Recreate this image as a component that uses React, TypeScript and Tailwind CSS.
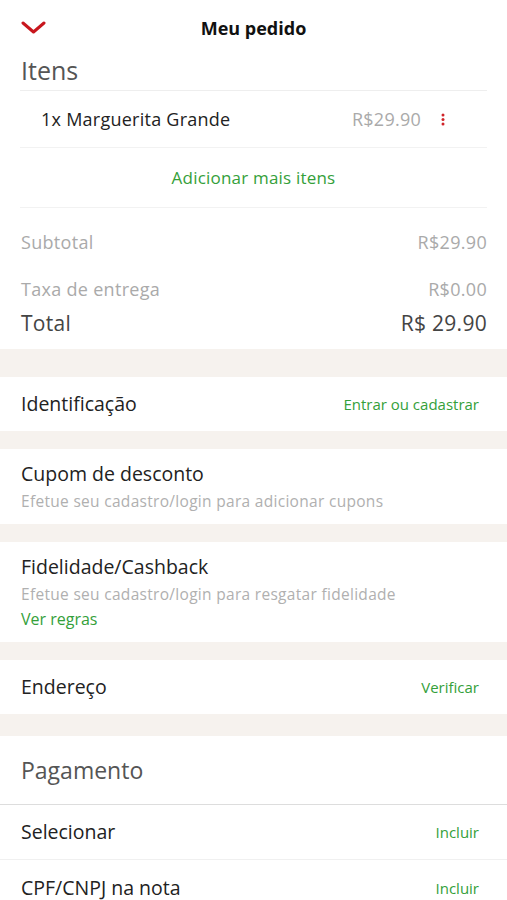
import React from 'react';

const font = { fontFamily: '"Open Sans", Lato, sans-serif' };

function Band({ h }: { h: string }) {
  return <div className={`${h} bg-[#f6f2ee]`} />;
}

function ActionRow({ label, action, h = 'h-[54px]' }: { label: string; action: string; h?: string }) {
  return (
    <div className={`${h} px-[21px] flex items-center justify-between`}>
      <span className="text-[19.5px] text-[#222]">{label}</span>
      <span className="text-[15px] text-[#34a03a] pr-[7px]">{action}</span>
    </div>
  );
}

export default function App() {
  return (
    <div className="w-[507px] h-[900px] overflow-hidden bg-white" style={font}>
      {/* Header */}
      <div className="h-[52px] relative flex items-center justify-center pt-[4px]">
        <svg className="absolute left-[21px] top-[21px]" width="25" height="13" viewBox="0 0 25 13" fill="none">
          <path d="M2 2 L12.5 11 L23 2" stroke="#c8161d" strokeWidth="3" strokeLinecap="round" strokeLinejoin="round" />
        </svg>
        <span className="text-[18px] font-bold text-[#111]">Meu pedido</span>
      </div>

      <div className="px-[20px]">
        <div className="h-[38px] flex items-center text-[25px] text-[#555] pl-[1px]">Itens</div>
        <div className="h-px bg-[#eeeeee]" />
        <div className="h-[56px] flex items-center pl-[21px]">
          <span className="text-[18px] tracking-[0.25px] text-[#222] flex-1">1x Marguerita Grande</span>
          <span className="text-[18px] tracking-[0.25px] text-[#aaa]">R$29.90</span>
          <span className="ml-[20px] mr-[42px] flex">
            <svg width="4" height="13" viewBox="0 0 4 13">
              <circle cx="2" cy="2" r="1.5" fill="#d0242a" />
              <circle cx="2" cy="6.5" r="1.5" fill="#d0242a" />
              <circle cx="2" cy="11" r="1.5" fill="#d0242a" />
            </svg>
          </span>
        </div>
        <div className="h-px bg-[#f2f2f2]" />
        <div className="h-[59px] flex items-center justify-center text-[17px] tracking-[0.2px] text-[#34a03a]">
          Adicionar mais itens
        </div>
        <div className="h-px bg-[#f2f2f2]" />

        <div className="pt-[22px] pb-[12px] pl-[1px]">
          <div className="flex justify-between text-[18px] tracking-[0.3px] text-[#aaa] h-[24px] items-center">
            <span>Subtotal</span>
            <span>R$29.90</span>
          </div>
          <div className="flex justify-between text-[18px] tracking-[0.3px] text-[#aaa] h-[24px] items-center mt-[23px]">
            <span>Taxa de entrega</span>
            <span>R$0.00</span>
          </div>
          <div className="flex justify-between text-[21px] tracking-[0.3px] text-[#444] h-[26px] items-center mt-[10px]">
            <span>Total</span>
            <span>R$ 29.90</span>
          </div>
        </div>
      </div>

      <Band h="h-[28px]" />
      <ActionRow label="Identificação" action="Entrar ou cadastrar" />
      <Band h="h-[18px]" />

      <div className="h-[75px] px-[21px] flex flex-col justify-center">
        <span className="text-[19.5px] text-[#222] leading-[24px]">Cupom de desconto</span>
        <span className="text-[15.5px] tracking-[0.3px] text-[#b0b0b0] leading-[20px] mt-[5px]">Efetue seu cadastro/login para adicionar cupons</span>
      </div>
      <Band h="h-[18px]" />

      <div className="h-[100px] px-[21px] flex flex-col justify-center">
        <span className="text-[19.5px] text-[#222] leading-[24px]">Fidelidade/Cashback</span>
        <span className="text-[15.5px] tracking-[0.3px] text-[#b0b0b0] leading-[20px] mt-[5px]">Efetue seu cadastro/login para resgatar fidelidade</span>
        <span className="text-[16px] text-[#34a03a] leading-[20px] mt-[5px]">Ver regras</span>
      </div>
      <Band h="h-[18px]" />

      <ActionRow label="Endereço" action="Verificar" />
      <Band h="h-[22px]" />

      <div className="h-[68px] px-[21px] flex items-center text-[23px] text-[#555]">Pagamento</div>
      <div className="h-px bg-[#dddddd]" />
      <ActionRow label="Selecionar" action="Incluir" />
      <div className="h-px bg-[#f0f0f0]" />
      <ActionRow label="CPF/CNPJ na nota" action="Incluir" h="h-[56px]" />
    </div>
  );
}
